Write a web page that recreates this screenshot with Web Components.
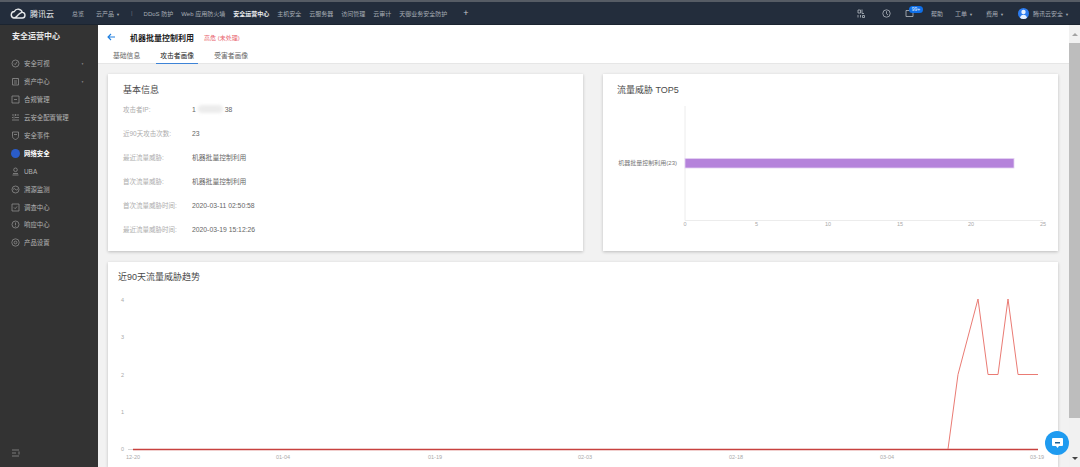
<!DOCTYPE html>
<html lang="zh">
<head>
<meta charset="utf-8">
<title>安全运营中心</title>
<style>
  html, body { margin: 0; height: 467px; overflow: hidden; background: #f2f2f2; }
  body { font-family: "Liberation Sans", "Noto Sans CJK SC", sans-serif; }
  .app { display: grid; grid-template-columns: 98px 971px 11px; grid-template-rows: 25px 442px; }
  tc-topbar { grid-column: 1 / 4; }
  .main { display: flex; flex-direction: column; min-width: 0; }
  .content { display: grid; grid-template-columns: 475px 455px; grid-template-rows: 177px 205px; column-gap: 20px; row-gap: 11px; padding: 10px 11px 0 10px; }
  .wide { grid-column: 1 / 3; }
</style>
</head>
<body>
<div class="app">
  <tc-topbar></tc-topbar>
  <tc-sidebar></tc-sidebar>
  <div class="main">
    <tc-page-header></tc-page-header>
    <div class="content">
      <tc-card heading="基本信息" style="--pad:15px;--top:10px">
        <tc-info-row label="攻击者IP:"><span>1</span><tc-blur></tc-blur><span>38</span></tc-info-row>
        <tc-info-row label="近90天攻击次数:">23</tc-info-row>
        <tc-info-row label="最近流量威胁:">机器批量控制利用</tc-info-row>
        <tc-info-row label="首次流量威胁:">机器批量控制利用</tc-info-row>
        <tc-info-row label="首次流量威胁时间:">2020-03-11 02:50:58</tc-info-row>
        <tc-info-row label="最近流量威胁时间:">2020-03-19 15:12:26</tc-info-row>
      </tc-card>
      <tc-card heading="流量威胁 TOP5" style="--pad:14px;--top:10px"><tc-bar-chart></tc-bar-chart></tc-card>
      <tc-card class="wide" heading="近90天流量威胁趋势" style="--pad:10px;--top:9px"><tc-trend-chart></tc-trend-chart></tc-card>
    </div>
  </div>
  <tc-scrollbar></tc-scrollbar>
</div>
<tc-chat-button></tc-chat-button>

<script>
const FONT = `"Liberation Sans", "Noto Sans CJK SC", sans-serif`;

class TcTopbar extends HTMLElement {
  constructor() {
    super();
    this.shadowDOM = this.attachShadow({mode: "open"});
  }
  connectedCallback() {
    const left = [["总览"], ["云产品", 1], ["|"], ["DDoS 防护"], ["Web 应用防火墙"], ["安全运营中心", 0, 1], ["主机安全"], ["云服务器"], ["访问管理"], ["云审计"], ["天御业务安全防护"]];
    this.shadowDOM.innerHTML = `
    <style>
      :host { display: flex; align-items: center; height: 25px; box-sizing: border-box; background: #232d3c; border-top: 2px solid #565c65; border-bottom: 1px solid #1b2430; color: #a8aeb6; font: 6px ${FONT}; }
      .logo { display: flex; align-items: center; gap: 4px; margin: 0 18px 0 10px; color: #e6e8ea; font-size: 8px; }
      nav { display: flex; align-items: center; gap: 8px; flex: 1; }
      nav span:nth-child(2) { margin-left: 4px; }
      .caret { font-size: 4px; margin-left: 2px; }
      .on { color: #eceef0; font-weight: bold; }
      .sep { margin: 0 3px; color: #6a7280; }
      .plus { font-size: 9px; margin-left: 8px; color: #c5c9ce; }
      .right { display: flex; align-items: center; }
      .right svg { display: block; fill: none; stroke: #b4bac1; stroke-width: .8; }
      .mail { position: relative; margin: 0 12px 0 14px; }
      .badge { position: absolute; left: 4px; top: -3px; width: 14px; height: 7px; border-radius: 4px; background: #0f6fe8; color: #e6f0ff; font-size: 5px; line-height: 7px; text-align: center; }
      .avatar { width: 11px; height: 11px; border-radius: 50%; background: #2c7cf0; display: flex; justify-content: center; overflow: hidden; margin-right: 4px; }
    </style>
    <div class="logo">
      <svg width="16" height="11" viewBox="0 0 16 11" fill="none" stroke="#e6e8ea" stroke-width="1.400"><path d="M3.800 10h8.200a2.800 2.800 0 0 0 .3-5.600 4.300 4.300 0 0 0-8-.9A3.300 3.300 0 0 0 3.800 10c2.200 0 3.200-2 4.700-3.400C9.800 5.300 10.500 4.700 12 4.400"/></svg>
      <span>腾讯云</span>
    </div>
    <nav>
      ${left.map(([t, caret, on]) => t === "|" ? `<span class="sep">|</span>` : `<span class="${on ? "on" : ""}">${t}${caret ? `<span class="caret">▼</span>` : ""}</span>`).join("")}
      <span class="plus">+</span>
    </nav>
    <div class="right">
      <svg width="8" height="9" viewBox="0 0 8 9"><path d="M1 1h2.500v3H1zM5 .5v4h2M1 6v2.500M3.500 6v2.500M5.500 6.500h2v2h-2z"/></svg>
      <svg style="margin-left:17px" width="9" height="9" viewBox="0 0 9 9"><circle cx="4.500" cy="4.500" r="3.700"/><path d="M4.500 2.200v2.500l1.500 1.300"/></svg>
      <span class="mail"><svg width="9" height="8" viewBox="0 0 9 8"><path d="M1 1.500h7v6H1z"/></svg><span class="badge">99+</span></span>
      <span style="margin-left:5px">帮助</span>
      <span style="margin-left:12px">工单<span class="caret">▼</span></span>
      <span style="margin-left:13px">费用<span class="caret">▼</span></span>
      <span style="margin-left:14px" class="avatar"><svg width="11" height="11" viewBox="0 0 11 11" style="stroke:none;fill:#e8f1ff"><circle cx="5.500" cy="4" r="2.200"/><path d="M2 11c0-3 1.500-4.200 3.500-4.200S9 8 9 11z"/></svg></span>
      <span style="margin-right:11px;margin-left:0">腾讯云安全<span class="caret">▼</span></span>
    </div>`;
  }
}

const SIDE_ICONS = {
  eye: `<circle cx="4.500" cy="4.500" r="3.500"/><path d="M3 4.500l1.200 1.200 2-3"/>`,
  asset: `<path d="M1.500 1.500h6v6.500h-6zM3 1v1.200M6 1v1.200M3 4h3M3 6h3"/>`,
  comp: `<path d="M1 1h7v7H1zM3 4.500h3"/>`,
  conf: `<path d="M1 2h2.500M5.500 2H8M1 4.500h1M4 4.500h4M1 7h3M6 7h2M4.500 1v2M3 3.500v2M5 6v2"/>`,
  shield: `<path d="M1.500 1h6v4.500c0 1.500-1.500 2.500-3 3-1.500-.5-3-1.500-3-3zM3 3.500h3"/>`,
  uba: `<circle cx="4.500" cy="2.800" r="1.800"/><path d="M1.500 8h6M2 6.500h5"/>`,
  trace: `<circle cx="4.500" cy="4.500" r="3.500"/><path d="M2 4.500l1.300-1 2 1.500L7 4"/>`,
  survey: `<path d="M1 1h7v7H1zM3 4.500l1.200 1.200L6 3.500"/>`,
  resp: `<circle cx="4.500" cy="4.500" r="3.500"/><path d="M4.500 2.500v2.800M4.500 6v.7"/>`,
  setting: `<circle cx="4.500" cy="4.500" r="3.700"/><circle cx="4.500" cy="4.500" r="1.400"/>`
};

class TcSidebar extends HTMLElement {
  constructor() {
    super();
    this.shadowDOM = this.attachShadow({mode: "open"});
  }
  connectedCallback() {
    const items = [["eye", "安全可视", 1], ["asset", "资产中心", 1], ["comp", "合规管理"], ["conf", "云安全配置管理"], ["shield", "安全事件"], ["net", "网络安全", 0, 1], ["uba", "UBA"], ["trace", "溯源监测"], ["survey", "调查中心"], ["resp", "响应中心"], ["setting", "产品设置"]];
    this.shadowDOM.innerHTML = `
    <style>
      :host { display: flex; flex-direction: column; height: 442px; background: #333333; color: #b3b3b3; font: 6.4px ${FONT}; }
      h1 { margin: 0; height: 24px; line-height: 24px; padding-left: 12px; font-size: 8px; color: #ececec; }
      ul { list-style: none; margin: 6px 0 0; padding: 0; flex: 1; }
      li { display: flex; align-items: center; height: 17.9px; padding-left: 11px; }
      svg { display: block; fill: none; stroke: #8d8d8d; stroke-width: .8; margin-right: 4px; flex: none; }
      .active { color: #fff; font-weight: bold; }
      .dot { width: 9px; height: 9px; border-radius: 50%; background: #2a5cc9; margin-right: 4px; flex: none; }
      .caret { margin-left: auto; margin-right: 14px; font-size: 3px; color: #8d8d8d; }
      .foot { height: 28px; padding: 0 0 0 11px; display: flex; align-items: center; margin-bottom: 0; }
    </style>
    <h1>安全运营中心</h1>
    <ul>
      ${items.map(([icon, text, caret, active]) => `<li class="${active ? "active" : ""}">
        ${icon === "net" ? `<span class="dot"></span>` : `<svg width="9" height="9" viewBox="0 0 9 9">${SIDE_ICONS[icon]}</svg>`}
        <span>${text}</span>${caret ? `<span class="caret">▼</span>` : ""}
      </li>`).join("")}
    </ul>
    <div class="foot"><svg width="9" height="8" viewBox="0 0 9 8"><path d="M1 1h7M1 4h4M1 7h7M8 2.500v3"/></svg></div>`;
  }
}

class TcPageHeader extends HTMLElement {
  constructor() {
    super();
    this.shadowDOM = this.attachShadow({mode: "open"});
  }
  connectedCallback() {
    this.shadowDOM.innerHTML = `
    <style>
      :host { display: block; height: 39px; box-sizing: border-box; background: #fff; border-bottom: 1px solid #e6e6e6; font: 7px ${FONT}; }
      .top { display: flex; align-items: center; height: 24px; padding-left: 9px; }
      svg { display: block; margin-right: 15px; }
      b { font-size: 8px; color: #222; margin-right: 10px; }
      .status { font-size: 6px; color: #e8626c; }
      .tabs { display: flex; padding-left: 15px; height: 14px; color: #666; }
      .tabs span { display: block; line-height: 14px; font-size: 6.800px; }
      .tabs .cur { color: #222; padding: 0 4px; margin: 0 16px 0 16px; border-bottom: 1px solid #3d83d6; height: 14px; }
    </style>
    <div class="top">
      <svg width="8" height="8" viewBox="0 0 8 8" fill="none" stroke="#1f7fe0" stroke-width="1.100"><path d="M8 4H1M4 1L1 4l3 3"/></svg>
      <b>机器批量控制利用</b><span class="status">高危 (未处理)</span>
    </div>
    <div class="tabs"><span>基础信息</span><span class="cur">攻击者画像</span><span>受害者画像</span></div>`;
  }
}

class TcCard extends HTMLElement {
  constructor() {
    super();
    this.shadowDOM = this.attachShadow({mode: "open"});
  }
  connectedCallback() {
    this.shadowDOM.innerHTML = `
    <style>
      :host { display: block; background: #fff; box-shadow: 0 1px 3px rgba(0,0,0,.22); overflow: hidden; }
      h2 { margin: 0; padding: var(--top) 0 0 var(--pad); font: normal 9px/12px ${FONT}; color: #4a4a4a; }
      .body { padding-top: 1px; }
    </style>
    <h2>${this.getAttribute("heading")}</h2>
    <div class="body"><slot></slot></div>`;
  }
}

class TcInfoRow extends HTMLElement {
  constructor() {
    super();
    this.shadowDOM = this.attachShadow({mode: "open"});
  }
  connectedCallback() {
    this.shadowDOM.innerHTML = `
    <style>
      :host { display: flex; align-items: center; height: 24px; padding-left: 15px; font: 6.800px ${FONT}; color: #666; }
      .label { width: 69px; flex: none; color: #adadad; font-size: 6.500px; }
      .val { display: flex; align-items: center; }
    </style>
    <span class="label">${this.getAttribute("label")}</span>
    <span class="val"><slot></slot></span>`;
  }
}

class TcBlur extends HTMLElement {
  constructor() {
    super();
    this.attachShadow({mode: "open"}).innerHTML = `
    <style>
      :host { display: block; width: 25px; height: 8px; margin: 0 2px 0 2px; border-radius: 4px; background: #ececec; filter: blur(1.500px); }
    </style>`;
  }
}

class TcBarChart extends HTMLElement {
  constructor() {
    super();
    this.shadowDOM = this.attachShadow({mode: "open"});
  }
  connectedCallback() {
    const ticks = [[685, 0], [756.500, 5], [828, 10], [900, 15], [971, 20], [1043, 25]];
    this.shadowDOM.innerHTML = `
    <style>
      :host { display: block; }
      svg { display: block; }
      text { font: 5.500px ${FONT}; fill: #a9a9a9; }
    </style>
    <svg width="455" height="154" viewBox="603 97 455 154">
      <path d="M685 106v114.500H1043" fill="none" stroke="#ececec" stroke-width="1"/>
      <rect x="685" y="158.500" width="329" height="9.500" fill="#b583db" stroke="#e4d2f2" stroke-width=".8"/>
      <text x="677" y="165" text-anchor="end" style="fill:#777;font-size:6px">机器批量控制利用(23)</text>
      ${ticks.map(([x, t]) => `<text x="${x}" y="225.500" text-anchor="middle">${t}</text>`).join("")}
    </svg>`;
  }
}

class TcTrendChart extends HTMLElement {
  constructor() {
    super();
    this.shadowDOM = this.attachShadow({mode: "open"});
  }
  connectedCallback() {
    const xs = [[133, "12-20"], [283, "01-04"], [435, "01-19"], [585, "02-03"], [736, "02-18"], [887, "03-04"], [1037, "03-19"]];
    const ys = [[449, 0], [412, 1], [375, 2], [337, 3], [300, 4]];
    this.shadowDOM.innerHTML = `
    <style>
      :host { display: block; }
      svg { display: block; }
      text { font: 5.500px ${FONT}; fill: #a9a9a9; }
    </style>
    <svg width="950" height="183" viewBox="108 284 950 183">
      <path d="M128 449.500h5" stroke="#ccc" stroke-width=".8"/>
      <path d="M133 449.500H1038" stroke="#c8423f" stroke-width="1.300" fill="none"/>
      <path d="M948 449L958 374.500 978 299 988 374.500H998L1008 299 1018 374.500H1038" fill="none" stroke="#ea7b74" stroke-width="1"/>
      ${ys.map(([y, t]) => `<text x="122.500" y="${y + 2}" text-anchor="middle">${t}</text>`).join("")}
      ${xs.map(([x, t]) => `<text x="${x}" y="459" text-anchor="middle">${t}</text>`).join("")}
    </svg>`;
  }
}

class TcScrollbar extends HTMLElement {
  constructor() {
    super();
    this.attachShadow({mode: "open"}).innerHTML = `
    <style>
      :host { display: flex; flex-direction: column; height: 442px; background: #f1f1f1; }
      .btn { height: 18px; display: flex; align-items: center; justify-content: center; flex: none; }
      .up { border: 3px solid transparent; border-top: 0; border-bottom: 3px solid #a3a3a3; }
      .down { border: 3px solid transparent; border-bottom: 0; border-top: 3px solid #444; }
      .thumb { height: 375px; background: #bdbdbd; flex: none; }
      .gap { flex: 1; }
    </style>
    <div class="btn"><div class="up"></div></div>
    <div class="thumb"></div>
    <div class="gap"></div>
    <div class="btn"><div class="down"></div></div>`;
  }
}

class TcChatButton extends HTMLElement {
  constructor() {
    super();
    this.attachShadow({mode: "open"}).innerHTML = `
    <style>
      :host { position: fixed; left: 1045px; top: 431px; width: 24px; height: 24px; border-radius: 50%; background: #1f9bf0; display: flex; align-items: center; justify-content: center; }
      svg { display: block; }
    </style>
    <svg width="11" height="10" viewBox="0 0 11 10"><path d="M1 0h9a1 1 0 0 1 1 1v6a1 1 0 0 1-1 1H7L5.500 10 4 8H1a1 1 0 0 1-1-1V1a1 1 0 0 1 1-1z" fill="#fff"/><path d="M3 4h5v1.500H3z" fill="#1b5f93"/></svg>`;
  }
}

customElements.define("tc-topbar", TcTopbar);
customElements.define("tc-sidebar", TcSidebar);
customElements.define("tc-page-header", TcPageHeader);
customElements.define("tc-card", TcCard);
customElements.define("tc-info-row", TcInfoRow);
customElements.define("tc-blur", TcBlur);
customElements.define("tc-bar-chart", TcBarChart);
customElements.define("tc-trend-chart", TcTrendChart);
customElements.define("tc-scrollbar", TcScrollbar);
customElements.define("tc-chat-button", TcChatButton);
</script>
</body>
</html>
